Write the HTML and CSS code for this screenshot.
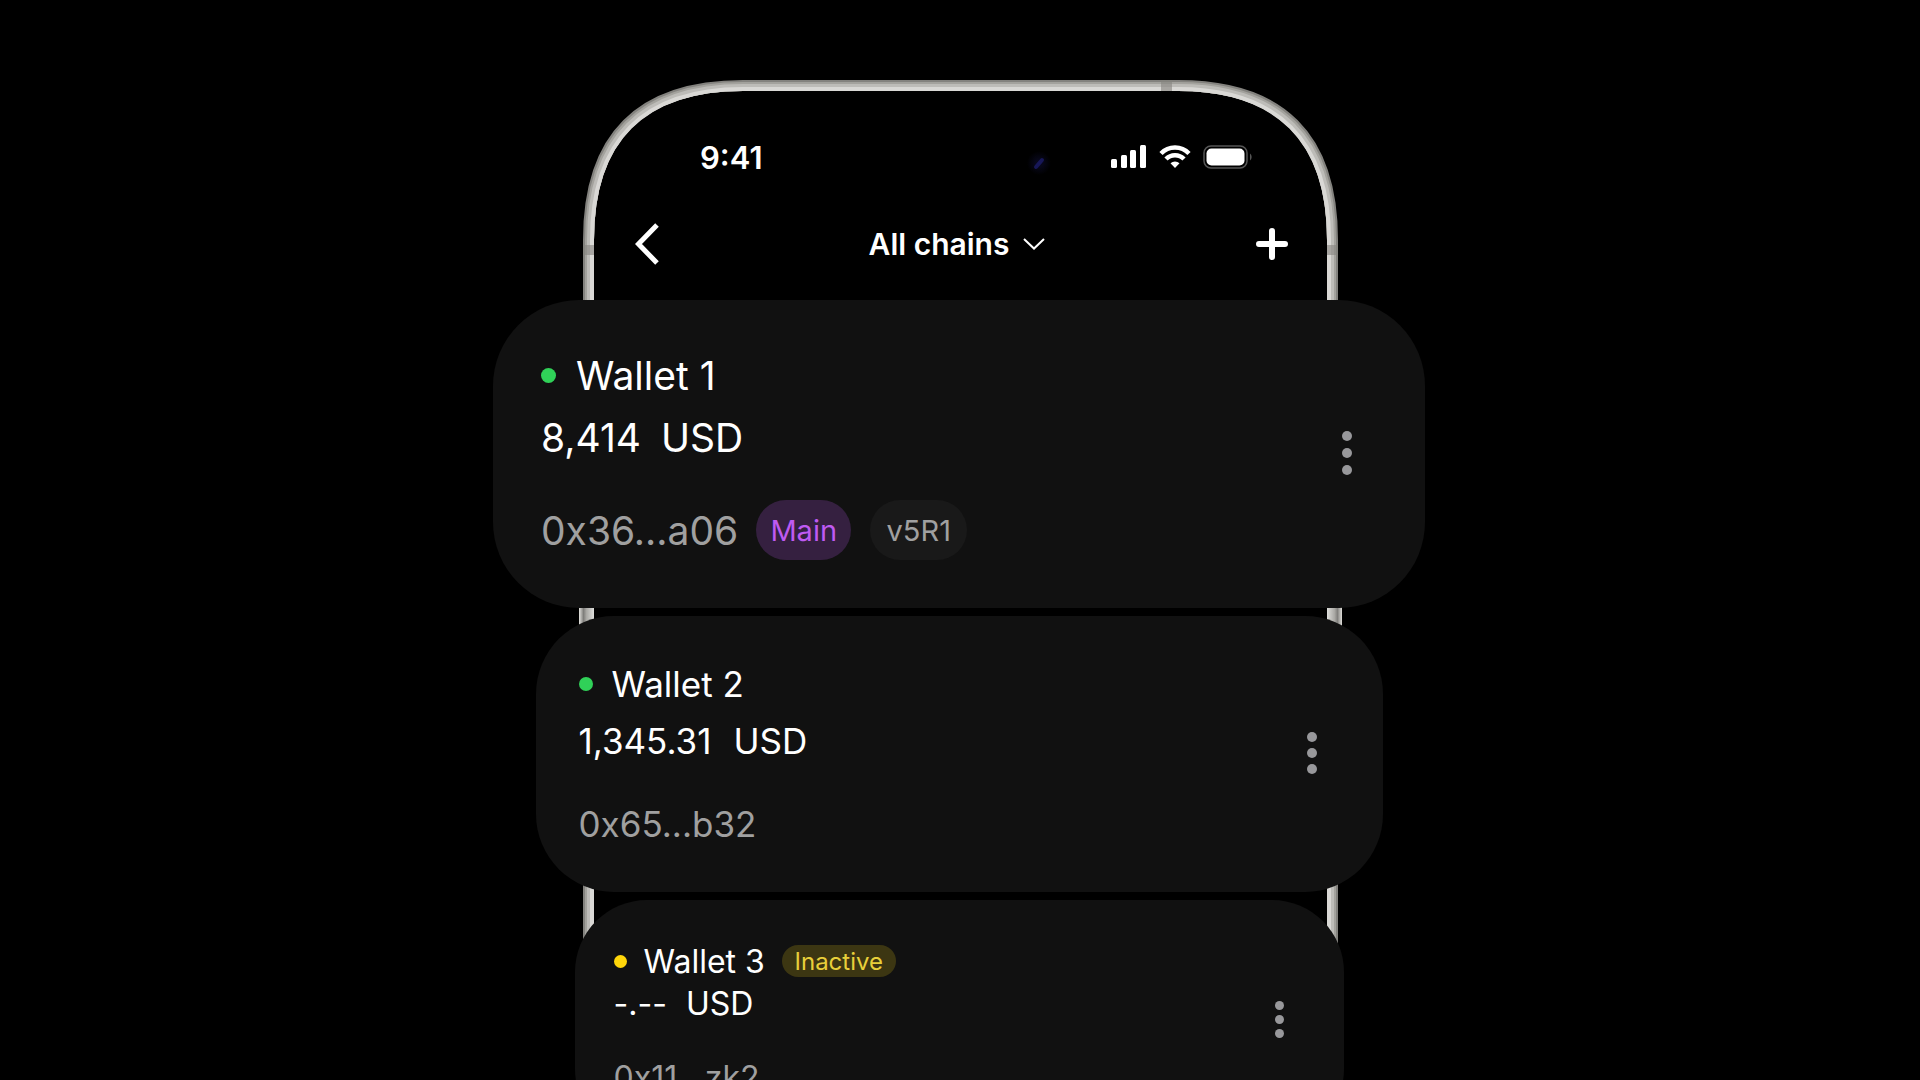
FILE: index.html
```html
<!DOCTYPE html>
<html lang="en">
<head>
<meta charset="utf-8">
<meta name="viewport" content="width=device-width, initial-scale=1">
<title>Wallets</title>
<link rel="stylesheet" href="styles.css">
</head>
<body>
<main class="stage">
  <svg class="frame" viewBox="0 0 766 1020" width="766" height="1020" fill="none" aria-hidden="true">
    <defs>
      <linearGradient id="left-key" x1="0" x2="1" y1="0" y2="0">
        <stop offset="0" stop-color="#e4e3df"/><stop offset=".3" stop-color="#7f7e7b"/><stop offset=".5" stop-color="#aaa9a5"/><stop offset="1" stop-color="#dededb"/>
      </linearGradient>
      <linearGradient id="right-key" x1="1" x2="0" y1="0" y2="0">
        <stop offset="0" stop-color="#deddd9"/><stop offset=".3" stop-color="#82817e"/><stop offset=".5" stop-color="#aaa9a5"/><stop offset="1" stop-color="#dededb"/>
      </linearGradient>
      <radialGradient id="lens">
        <stop offset="0" stop-color="#15154a"/><stop offset="1" stop-color="#000"/>
      </radialGradient>
    </defs>
    <path stroke="#83827e" stroke-width="11" d="M10.500 1020V160C10.500 57 62 5.500 165 5.500H600C703 5.500 754.500 57 754.500 160V1020"/>
    <path stroke="#a3a29d" stroke-width="9" d="M11.500 1020V160C11.500 58 63 6.500 165 6.500H600C702 6.500 753.500 58 753.500 160V1020"/>
    <path stroke="#bdbcb8" stroke-width="7" d="M12.500 1020V160C12.500 59 64 7.500 165 7.500H600C701 7.500 752.500 59 752.500 160V1020"/>
    <path stroke="#d9d8d5" stroke-width="4" d="M14 1020V160C14 60.500 65.500 9 165 9H600C699.500 9 751 60.500 751 160V1020"/>
    <path fill="#85847f" fill-opacity=".6" d="M5 165h11v10H5zM749 165h11v10h-11zM583 0h11v11h-11z"/>
    <path fill="url(#left-key)" d="M1 460h15v140H1z"/>
    <path fill="url(#right-key)" d="M749 460h15v140h-15z"/>
    <circle cx="461" cy="83" r="12" fill="url(#lens)" opacity=".5"/>
    <path stroke="#1c1c68" stroke-width="4" stroke-linecap="round" d="M458 87l6-7" opacity=".8"/>
  </svg>

  <header class="phone-top">
    <div class="status">
      <time class="clock">9:41</time>
      <div class="signals">
        <svg width="36" height="24" viewBox="0 0 36 24" fill="#fff" role="img" aria-label="Signal"><rect x="0" y="14" width="6" height="9" rx="1.500"/><rect x="10" y="10" width="6" height="13" rx="1.500"/><rect x="19" y="5" width="6" height="18" rx="1.500"/><rect x="29" y="0" width="6" height="23" rx="1.500"/></svg>
        <svg width="32" height="24" viewBox="0 0 32 24" fill="none" stroke="#fff" stroke-width="4.500" role="img" aria-label="Wi-Fi"><path d="M2 8.500a19.500 19.500 0 0 1 28 0M7 14a12.500 12.500 0 0 1 18 0"/><path fill="#fff" stroke="none" d="M11.500 18.300a6.500 6.500 0 0 1 9 0L16 23z"/></svg>
        <svg width="50" height="24" viewBox="0 0 50 24" role="img" aria-label="Battery"><rect x="1" y="1" width="43" height="22" rx="7" fill="none" stroke="#565656" stroke-width="1.500"/><rect x="3.500" y="3.500" width="38" height="17" rx="5" fill="#fff"/><path d="M47 8.500a4.500 4.500 0 0 1 0 7z" fill="#555"/></svg>
      </div>
    </div>
    <nav class="nav" aria-label="Wallets">
      <button class="icon-button" type="button" aria-label="Back"><svg width="24" height="42" viewBox="0 0 24 42" fill="none" stroke="#fff" stroke-width="5"><path d="M22 2L3.500 21 22 40"/></svg></button>
      <button class="chains" type="button">All chains <svg width="22" height="12" viewBox="0 0 22 12" fill="none" stroke="#fff" stroke-width="2"><path d="M1 1l10 9.500L21 1"/></svg></button>
      <button class="icon-button" type="button" aria-label="Add wallet"><svg width="34" height="34" viewBox="0 0 34 34" fill="none" stroke="#fff" stroke-width="6" stroke-linecap="round"><path d="M17 4v26M4 17h26"/></svg></button>
    </nav>
  </header>

  <section class="wallets">
    <article class="card card-large">
      <div class="details">
        <h2 class="name"><span class="dot"></span>Wallet 1</h2>
        <p class="balance"><span>8,414</span><span>USD</span></p>
        <p class="address">0x36...a06 <span class="tag tag-main">Main</span><span class="tag tag-version">v5R1</span></p>
      </div>
      <button class="more" type="button" aria-label="Wallet 1 options"><i></i><i></i><i></i></button>
    </article>
    <article class="card card-medium">
      <div class="details">
        <h2 class="name"><span class="dot"></span>Wallet 2</h2>
        <p class="balance"><span>1,345.31</span><span>USD</span></p>
        <p class="address">0x65...b32</p>
      </div>
      <button class="more" type="button" aria-label="Wallet 2 options"><i></i><i></i><i></i></button>
    </article>
    <article class="card card-small">
      <div class="details">
        <h2 class="name"><span class="dot dot-inactive"></span>Wallet 3 <span class="tag tag-inactive">Inactive</span></h2>
        <p class="balance"><span>-.--</span><span>USD</span></p>
        <p class="address">0x11...zk2</p>
      </div>
      <button class="more" type="button" aria-label="Wallet 3 options"><i></i><i></i><i></i></button>
    </article>
  </section>
</main>
</body>
</html>
```
FILE: styles.css
```css
* {
  box-sizing: border-box;
}

body {
  margin: 0;
  background: #000;
  color: #fff;
  font-family: Inter, "Liberation Sans", sans-serif;
}

h2,
p {
  margin: 0;
  font-size: inherit;
  font-weight: 400;
}

button {
  padding: 0;
  border: 0;
  background: none;
  color: inherit;
  font: inherit;
  cursor: pointer;
}

svg {
  display: block;
}

.stage {
  position: relative;
  display: flex;
  flex-direction: column;
  align-items: center;
  height: 100vh;
  padding-top: 80px;
  overflow: hidden;
}

/* The handset outline lies behind the screen content and the cards */
.frame {
  position: absolute;
  top: 80px;
  left: 50%;
  margin-left: -382px;
}

.phone-top {
  position: relative;
  flex: none;
  width: 100%;
  max-width: 754px;
  padding: 57px 0 26px;
}

.status {
  display: flex;
  align-items: center;
  justify-content: space-between;
  height: 40px;
  padding: 0 84px 0 117px;
}

.clock {
  font-size: 31px;
  font-weight: 600;
}

.signals {
  display: flex;
  gap: 12px;
}

.nav {
  display: flex;
  align-items: center;
  justify-content: space-between;
  height: 60px;
  margin-top: 37px;
  padding: 0 48px 0 52px;
}

.chains {
  display: flex;
  align-items: center;
  gap: 14px;
  font-size: 30px;
  font-weight: 600;
}

.wallets {
  position: relative;
  display: flex;
  flex: none;
  flex-direction: column;
  align-items: center;
  gap: 8px;
  width: 100%;
  padding-right: 2px;
}

.card {
  display: flex;
  align-items: center;
  justify-content: space-between;
  width: 100%;
  background: #111;
}

.name,
.balance,
.address {
  display: flex;
  align-items: center;
}

.address {
  color: #a0a0a0;
}

.dot {
  flex: none;
  border-radius: 50%;
  background: #30d158;
}

.dot-inactive {
  background: #ffd60a;
}

.tag {
  display: flex;
  align-items: center;
  justify-content: center;
  border-radius: 30px;
}

.tag-main {
  width: 95px;
  height: 60px;
  margin-left: 18px;
  background: #352040;
  color: #bf5af2;
  font-size: 29px;
}

.tag-version {
  width: 97px;
  height: 60px;
  margin-left: 19px;
  background: #191919;
  font-size: 29px;
}

.tag-inactive {
  width: 114px;
  height: 32px;
  background: #3c3612;
  color: #e8cf3a;
  font-size: 24px;
}

.more {
  display: flex;
  flex-direction: column;
  align-items: center;
}

.more i {
  border-radius: 50%;
  background: #98989b;
}

.card-large {
  max-width: 932px;
  padding: 44px 73px 46px 48px;
  border-radius: 86px;
  font-size: 39px;
}

.card-large .name,
.card-large .balance {
  height: 62px;
}

.card-large .name {
  gap: 20px;
}

.card-large .balance {
  gap: 20px;
}

.card-large .address {
  height: 60px;
  margin-top: 32px;
  margin-bottom: 2px;
}

.card-large .dot {
  width: 15px;
  height: 15px;
}

.card-large .more {
  gap: 7px;
}

.card-large .more i {
  width: 10px;
  height: 10px;
}

.card-medium {
  max-width: 847px;
  padding: 39px 66px 41px 43px;
  border-radius: 78px;
  font-size: 35px;
}

.card-medium .name,
.card-medium .balance {
  height: 57px;
}

.card-medium .name {
  gap: 19px;
}

.card-medium .balance {
  gap: 22px;
}

.card-medium .address {
  height: 54px;
  margin-top: 28px;
}

.card-medium .dot {
  width: 14px;
  height: 14px;
}

.card-medium .more {
  gap: 6px;
}

.card-medium .more i {
  width: 10px;
  height: 10px;
}

.card-small {
  max-width: 769px;
  padding: 40px 60px 42px 39px;
  border-radius: 72px;
  font-size: 32px;
}

.card-small .name,
.card-small .balance {
  height: 42px;
}

.card-small .name {
  gap: 17px;
}

.card-small .balance {
  gap: 19px;
}

.card-small .address {
  height: 44px;
  margin-top: 31px;
}

.card-small .dot {
  width: 13px;
  height: 13px;
}

.card-small .more {
  gap: 5px;
}

.card-small .more i {
  width: 9px;
  height: 9px;
}
```
